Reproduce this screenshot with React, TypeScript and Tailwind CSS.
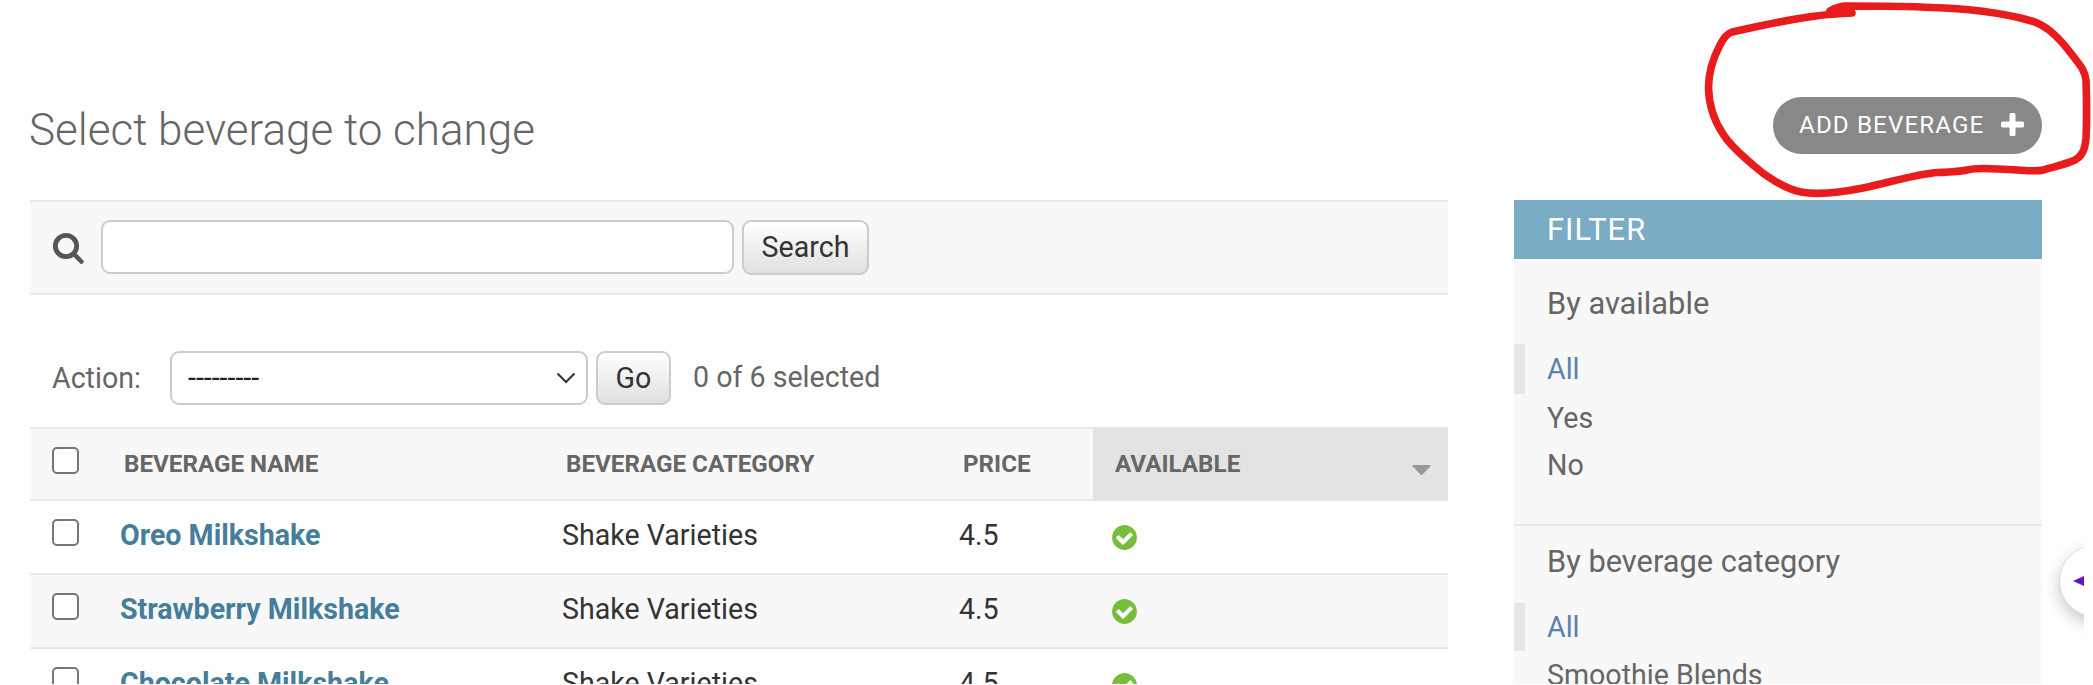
import { ReactNode } from "react";

const rows = ["Oreo Milkshake", "Strawberry Milkshake", "Chocolate Milkshake"];

function Checkbox() {
  return <span className="block h-[27px] w-[27px] shrink-0 rounded-[5px] border-2 border-[#767676] bg-white" />;
}

function CheckIcon() {
  return (
    <svg viewBox="0 0 1792 1792" className="block h-[29px] w-[29px]">
      <path
        fill="#74be3c"
        d="M1412 734q0-28-18-46l-91-90q-19-19-45-19t-45 19l-408 407-226-226q-19-19-45-19t-45 19l-91 90q-18 18-18 46 0 27 18 45l362 362q19 19 45 19 27 0 46-19l543-543q18-18 18-45zm252 162q0 209-103 385.500t-279.500 279.500-385.500 103-385.500-103-279.500-279.500-103-385.500 103-385.500 279.500-279.500 385.500-103 385.500 103 279.500 279.500 103 385.500z"
      />
    </svg>
  );
}

function FilterItem({ children, active, className }: { children: ReactNode; active?: boolean; className: string }) {
  return (
    <li
      className={`flex items-center text-[28.6px] whitespace-nowrap ${
        active ? "border-l-[11px] border-[#e6e6e6] pl-[22px] text-[#5b80b2]" : "pl-[33px] text-[#666]"
      } ${className}`}
    >
      {children}
    </li>
  );
}

export default function App() {
  return (
    <div className="relative h-[685px] w-[2093px] overflow-hidden bg-white font-[Roboto,sans-serif] text-[28.6px] text-[#333]">
      <div className="flex h-[684px] flex-col overflow-hidden pl-[30px]">
        <header className="flex h-[200px] w-[2012px] shrink-0 items-start justify-between">
          <h1 className="-ml-px pt-[100px] text-[44px] leading-[60px] font-light whitespace-nowrap text-[#666]">
            Select beverage to change
          </h1>
          <a className="mt-[97px] flex h-[57px] w-[269px] items-center rounded-full bg-[#888] pl-[26px] text-[24.2px] tracking-[1.1px] whitespace-nowrap text-white">
            ADD BEVERAGE
            <svg viewBox="0 0 23 23" className="mr-[18px] -mt-[3px] ml-auto h-[23px] w-[23px]">
              <path fill="#fff" d="M10 0h3q1.500 0 1.500 1.500V8.500h7q1.500 0 1.500 1.500v3q0 1.500-1.500 1.500h-7v7q0 1.500-1.500 1.500h-3q-1.500 0-1.500-1.500v-7h-7q-1.500 0-1.500-1.500v-3q0-1.500 1.500-1.500h7V1.500Q8.500 0 10 0z" />
            </svg>
          </a>
        </header>

        <div className="flex items-start">
          <main className="w-[1418px]">
            <div className="flex h-[95px] items-start border-y-2 border-[#e8e8e8] bg-[#f8f8f8] pt-[18px] pl-[22px]">
              <svg viewBox="0 0 32 32" className="mt-[12px] h-[32px] w-[32px]" fill="none" stroke="#555">
                <circle cx="14" cy="14" r="10.700" strokeWidth="4.800" />
                <path d="M22 22l7.300 7.500" strokeWidth="4.600" strokeLinecap="round" />
              </svg>
              <div className="ml-[17px] h-[54px] w-[633px] rounded-[9px] border-2 border-[#ccc] bg-white" />
              <button className="ml-[8px] h-[55px] w-[127px] rounded-[9px] border-2 border-[#ccc] bg-gradient-to-b from-white to-[#e0e0e0] pb-px">
                Search
              </button>
            </div>

            <div className="flex h-[132px] items-start pt-[56px] pl-[22px] leading-[54px] whitespace-nowrap text-[#666]">
              <span className="w-[118px]">Action:</span>
              <div className="flex h-[54px] w-[418px] items-center justify-between rounded-[9px] border-2 border-[#ccc] bg-white pr-[10px] pl-[16px] text-[#222]">
                <span>---------</span>
                <svg viewBox="0 0 20 12" className="h-[12px] w-[20px]" fill="none" stroke="#333" strokeWidth="2">
                  <path d="M1.500 1.500L10 10l8.500-8.500" />
                </svg>
              </div>
              <button className="ml-[8px] h-[54px] w-[75px] rounded-[9px] border-2 border-[#ccc] bg-gradient-to-b from-white to-[#e0e0e0] leading-none text-[#333]">
                Go
              </button>
              <span className="-mt-px ml-[22px]">0 of 6 selected</span>
            </div>

            <div className="grid h-[74px] grid-cols-[94px_442px_397px_130px_355px] border-y-2 border-[#e8e8e8] bg-[#f8f8f8] text-[24.2px] leading-[70px] font-bold whitespace-nowrap text-[#666]">
              <div className="pt-[18px] pl-[22px]">
                <Checkbox />
              </div>
              <div>BEVERAGE NAME</div>
              <div>BEVERAGE CATEGORY</div>
              <div>PRICE</div>
              <div className="-my-0.5 flex items-center justify-between bg-[#e3e3e3] pr-[17px] pl-[22px]">
                AVAILABLE
                <svg viewBox="0 0 19 10" className="mt-[11px] h-[10px] w-[19px]">
                  <path fill="#999" d="M1.500 0h16q1.500 0 1 1.200L10.500 9.500q-1 .8-2 0L.5 1.200Q0 0 1.500 0z" />
                </svg>
              </div>
            </div>

            {rows.map((name, i) => (
              <div
                key={name}
                className={`grid h-[74px] grid-cols-[90px_442px_397px_151px_338px] border-b-2 border-[#e8e8e8] leading-[68px] whitespace-nowrap ${
                  i % 2 ? "bg-[#f8f8f8]" : "bg-white"
                }`}
              >
                <div className="pt-[18px] pl-[22px]">
                  <Checkbox />
                </div>
                <a className="font-bold text-[#447e9b]">{name}</a>
                <div>Shake Varieties</div>
                <div>4.5</div>
                <div className="pt-[22px]">
                  <CheckIcon />
                </div>
              </div>
            ))}
          </main>

          <aside className="ml-[66px] h-[484px] w-[528px] overflow-hidden bg-[#f8f8f8]">
            <h2 className="h-[59px] bg-[#7bacc6] pl-[33px] text-[30.8px] leading-[59px] tracking-[1.1px] text-white">FILTER</h2>
            <h3 className="mt-[25px] h-[60px] pl-[33px] text-[30.8px] leading-[40px] text-[#666]">By available</h3>
            <ul className="h-[182px] border-b-2 border-[#e8e8e8]">
              <FilterItem active className="h-[50px]">All</FilterItem>
              <FilterItem className="h-[48px]">Yes</FilterItem>
              <FilterItem className="h-[47px]">No</FilterItem>
            </ul>
            <h3 className="h-[77px] pt-[16px] pl-[33px] text-[30.8px] leading-[40px] text-[#666]">By beverage category</h3>
            <ul>
              <FilterItem active className="h-[48px]">All</FilterItem>
              <FilterItem className="h-[48px]">Smoothie Blends</FilterItem>
            </ul>
          </aside>
        </div>
      </div>

      <div className="absolute top-[520px] left-[2044px] h-[140px] w-[40px] overflow-hidden">
        <div className="absolute top-[25px] left-[15px] h-[72px] w-[72px] rounded-full border border-[#ddd] bg-white shadow-[0_6px_16px_rgba(0,0,0,0.22)]" />
        <svg viewBox="0 0 12 12" className="absolute top-[55px] left-[29px] h-[12px] w-[12px]">
          <path fill="#6a11cb" d="M0 6L12 .5v11z" />
        </svg>
      </div>

      <svg viewBox="0 0 400 205" className="absolute top-0 left-[1693px] h-[205px] w-[400px]" fill="none" stroke="#e81c1c" strokeWidth="7.600" strokeLinecap="round" strokeLinejoin="round">
        <path d="M159 13C120 14 80 23 39 32C33 34 30 39 27 45C19 60 15.500 72 15.500 88C16 107 22 122 30 134C38 147 50 156 60 165C72 176 92 189 108 192C124 195 150 192 170 188C195 183 222 174 245 172.500C258 172 268 171.500 274 170C286 167 300 169 315 169.500C330 170 342 172 350 170C360 167 374 164 382 160C389 156 392 150 393 138C394 118 393.500 95 393 80C392 70 386 64 380 56C368 40 354 24 335 20C310 13 270 8 240 7.500C210 6 180 6 153 6C147 6 142 8 137 11" />
      </svg>
    </div>
  );
}
